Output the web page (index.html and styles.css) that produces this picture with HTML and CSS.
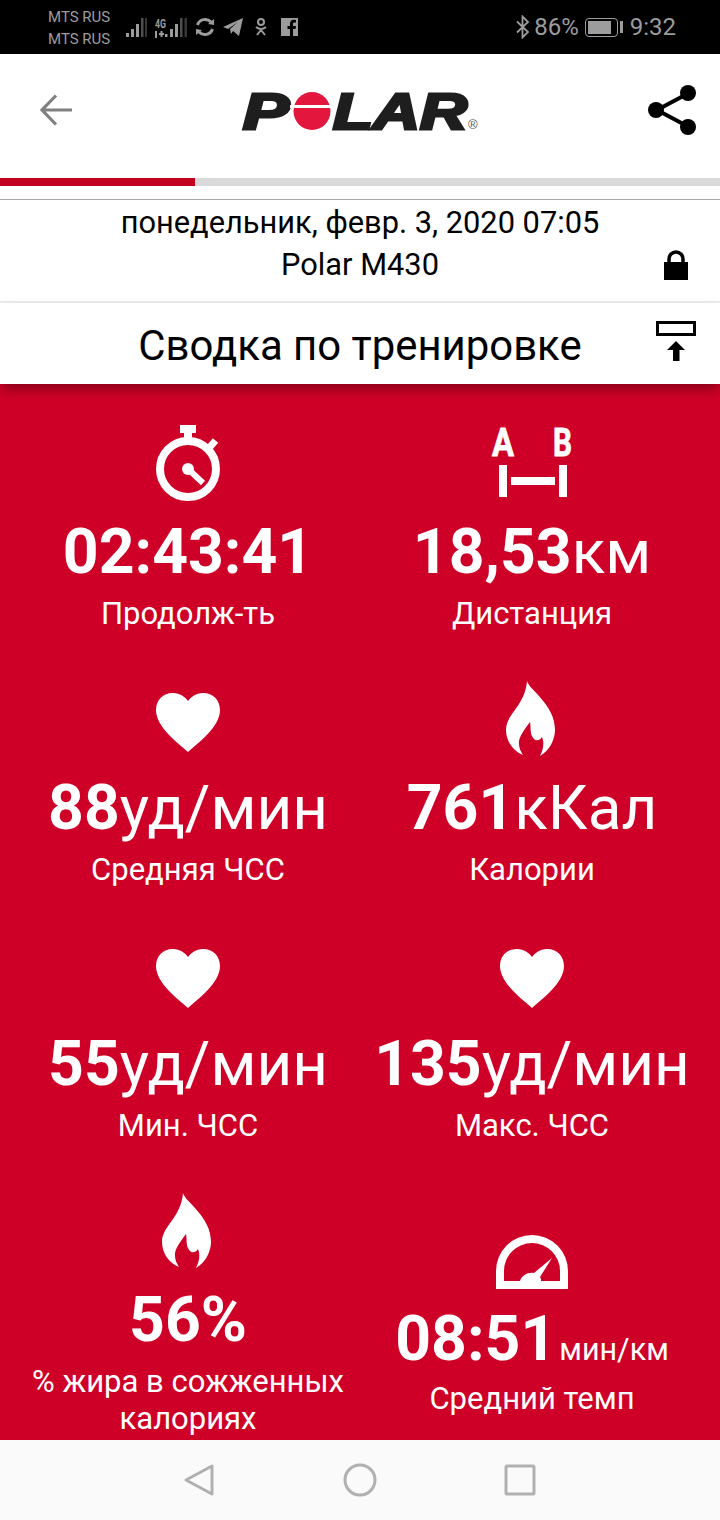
FILE: index.html
```html
<!DOCTYPE html>
<html lang="en">
<head>
    <meta charset="UTF-8">
    <meta name="viewport" content="width=device-width, initial-scale=1.0">
    <title>Polar Flow</title>
    <link rel="stylesheet" href="styles.css">
</head>
<body>
    <div class="status-bar">
        <div class="status-left">
            <div class="carriers"><span>MTS RUS</span><span>MTS RUS</span></div>
            <svg class="s-signal" viewBox="0 0 21 20"><rect x="0" y="15" width="3" height="4"/><rect x="5" y="11" width="3" height="8"/><rect x="10" y="6" width="3" height="13"/><rect x="15" y="0" width="2.500" height="19" opacity=".5"/><rect x="19" y="0" width="2" height="19" opacity=".35"/></svg>
            <svg class="s-lte" viewBox="0 0 32 20"><text class="s-4g" x="0" y="10" textLength="11" lengthAdjust="spacingAndGlyphs">4G</text><rect x="0" y="13" width="2" height="7"/><rect x="4" y="15" width="5" height="2"/><rect x="5.500" y="13" width="2" height="6"/><rect x="10" y="16" width="2.500" height="3"/><rect x="15" y="11" width="3" height="8"/><rect x="20" y="6" width="3" height="13"/><rect x="25" y="0" width="2.500" height="19" opacity=".5"/><rect x="29.500" y="0" width="2.500" height="19" opacity=".35"/></svg>
            <svg class="s-sync" viewBox="0 0 20 20"><path d="M2.500 8 A8 8 0 0 1 16 5 M17.500 12 A8 8 0 0 1 4 15" fill="none" stroke="#9c9c9c" stroke-width="3"/><path d="M19 2 L19 8 L13 7Z M1 18 L1 12 L7 13Z" fill="#9c9c9c"/></svg>
            <svg class="s-tg" viewBox="0 0 20 18"><path d="M0 9 L20 0 L16 18 L10 13 L8 16 L7 11 L15 4 L5 11Z"/></svg>
            <svg class="s-ok" viewBox="0 0 12 18"><circle cx="6" cy="4" r="3" fill="none" stroke="#9c9c9c" stroke-width="2"/><path d="M1 9 Q6 13 11 9 M6 11 V12 M2 17 L6 12 L10 17" fill="none" stroke="#9c9c9c" stroke-width="2"/></svg>
            <svg class="s-fb" viewBox="0 0 17 18"><path fill-rule="evenodd" d="M0 0H17V18H12V11H14.500L15 8H12V6C12 5 12.500 4.500 13.500 4.500H15V2C14 1.800 13 1.800 12.500 1.800C10.500 1.800 9 3.200 9 5.500V8H6.500V11H9V18H0Z"/></svg>
        </div>
        <div class="status-right">
            <svg class="s-bt" viewBox="0 0 14 24"><path d="M1 6.500 L12 17 L6.500 22.500 V1.500 L12 7 L1 17.500" fill="none" stroke="#9c9c9c" stroke-width="1.800"/></svg>
            <span class="s-pct">86%</span>
            <div class="battery"><div class="battery-body"><div class="battery-fill"></div></div><div class="battery-tip"></div></div>
            <span class="s-time">9:32</span>
        </div>
    </div>

    <header class="app-header">
        <svg class="back-icon" viewBox="0 0 32 32"><path d="M16 1.500 L2 16 L16 30.500 M2.500 16 H32" fill="none" stroke="#808080" stroke-width="3.200"/></svg>
        <svg class="logo" viewBox="0 -12 240 64">
            <text class="logo-text" x="3" y="37" textLength="46" lengthAdjust="spacingAndGlyphs">P</text>
            <ellipse cx="72" cy="19" rx="18.500" ry="19" fill="#e3173e"/>
            <rect x="50" y="13" width="44" height="3" fill="#fff"/>
            <text class="logo-text" x="93" y="37" textLength="134" lengthAdjust="spacingAndGlyphs">LAR</text>
            <text class="logo-reg" x="228" y="37">®</text>
        </svg>
        <svg class="share-icon" viewBox="0 0 48 50"><path d="M39 9 L9 25 L39 41" fill="none" stroke="#000" stroke-width="4"/><circle cx="40" cy="8" r="8"/><circle cx="8" cy="25" r="8"/><circle cx="40" cy="42" r="8"/></svg>
    </header>

    <div class="progress"><div class="progress-fill"></div></div>

    <section class="session-info">
        <div class="session-text">
            <div>понедельник, февр. 3, 2020 07:05</div>
            <div>Polar M430</div>
        </div>
        <svg class="lock-icon" viewBox="0 0 24 30"><path d="M5 13 V9 A7 7 0 0 1 19 9 V13" fill="none" stroke="#000" stroke-width="3.500"/><rect x="0" y="12" width="24" height="18"/></svg>
    </section>

    <section class="summary-title">
        <h1>Сводка по тренировке</h1>
        <svg class="export-icon" viewBox="0 0 40 40"><rect x="1.500" y="1.500" width="37" height="12" fill="#fff" stroke="#000" stroke-width="3"/><path d="M20 20 L29 29 H23.500 V40 H17 V29 H11Z"/></svg>
    </section>

    <main class="stats">
        <div class="stat">
            <svg class="stat-icon" viewBox="0 0 80 80"><rect x="32" y="1" width="16" height="8"/><rect x="36" y="8" width="8" height="9"/><path d="M62 23 L67.500 16.500" stroke="#fff" stroke-width="7"/><circle cx="40" cy="45" r="28" fill="none" stroke="#fff" stroke-width="8"/><circle cx="40" cy="45" r="6"/><path d="M40 45 L55 59" stroke="#fff" stroke-width="6"/></svg>
            <div class="value">02:43:41</div>
            <div class="label">Продолж-ть</div>
        </div>
        <div class="stat">
            <svg class="stat-icon stat-icon-ab" viewBox="-4 -8 88 88"><text class="ab" x="0" y="32" textLength="22" lengthAdjust="spacingAndGlyphs">A</text><text class="ab" x="61" y="32" textLength="19" lengthAdjust="spacingAndGlyphs">B</text><rect x="7" y="41" width="8" height="32"/><rect x="67" y="41" width="8" height="32"/><rect x="19" y="53" width="44" height="8"/></svg>
            <div class="value">18,53<span class="unit">км</span></div>
            <div class="label">Дистанция</div>
        </div>
        <div class="stat">
            <svg class="stat-icon" viewBox="0 0 80 80"><path d="M40 72 C30 63 8 47 8 30 C8 20 15 13 25 13 C32 13 37 17 40 21 C43 17 48 13 55 13 C65 13 72 20 72 30 C72 47 50 63 40 72Z"/></svg>
            <div class="value">88<span class="unit">уд/мин</span></div>
            <div class="label">Средняя ЧСС</div>
        </div>
        <div class="stat">
            <svg class="stat-icon" viewBox="0 0 80 80"><path d="M35 1 C37 10 63 24 63 50 C63 60 57 71 48 76 C52 68 52 62 50 57 C47 62 42 61 40 56 C38 52 39 47 38 42 C32 50 26 58 27 64 C27 68 29 72 31 75 C21 71 14 61 14 50 C14 34 33 26 35 1Z"/></svg>
            <div class="value">761<span class="unit">кКал</span></div>
            <div class="label">Калории</div>
        </div>
        <div class="stat">
            <svg class="stat-icon" viewBox="0 0 80 80"><path d="M40 72 C30 63 8 47 8 30 C8 20 15 13 25 13 C32 13 37 17 40 21 C43 17 48 13 55 13 C65 13 72 20 72 30 C72 47 50 63 40 72Z"/></svg>
            <div class="value">55<span class="unit">уд/мин</span></div>
            <div class="label">Мин. ЧСС</div>
        </div>
        <div class="stat">
            <svg class="stat-icon" viewBox="0 0 80 80"><path d="M40 72 C30 63 8 47 8 30 C8 20 15 13 25 13 C32 13 37 17 40 21 C43 17 48 13 55 13 C65 13 72 20 72 30 C72 47 50 63 40 72Z"/></svg>
            <div class="value">135<span class="unit">уд/мин</span></div>
            <div class="label">Макс. ЧСС</div>
        </div>
        <div class="stat">
            <svg class="stat-icon" viewBox="0 0 80 80"><path d="M35 1 C37 10 63 24 63 50 C63 60 57 71 48 76 C52 68 52 62 50 57 C47 62 42 61 40 56 C38 52 39 47 38 42 C32 50 26 58 27 64 C27 68 29 72 31 75 C21 71 14 61 14 50 C14 34 33 26 35 1Z"/></svg>
            <div class="value">56%</div>
            <div class="label label-wrap">% жира в сожженных калориях</div>
        </div>
        <div class="stat stat-pace">
            <svg class="gauge-icon" viewBox="0 0 72 54"><path fill-rule="evenodd" d="M0 54 V36 A36 36 0 0 1 72 36 V54Z M8 46 H24 C26 40 32 37 38 38 L56 23 L44 42 C45 43 45 45 45 46 H64 V36 A28 28 0 0 0 8 36Z"/></svg>
            <div class="value">08:51<span class="unit-small">мин/км</span></div>
            <div class="label">Средний темп</div>
        </div>
    </main>

    <nav class="nav-bar">
        <svg class="nav-icon" viewBox="0 0 34 34"><path d="M3 17 L29 3 V31Z" fill="none" stroke="#b0b0b0" stroke-width="3" stroke-linejoin="round"/></svg>
        <svg class="nav-icon" viewBox="0 0 34 34"><circle cx="17" cy="17" r="15" fill="none" stroke="#b0b0b0" stroke-width="3"/></svg>
        <svg class="nav-icon" viewBox="0 0 34 34"><rect x="3" y="3" width="28" height="28" rx="1" fill="none" stroke="#b0b0b0" stroke-width="3"/></svg>
    </nav>
</body>
</html>
```

FILE: styles.css
```css
* {
    margin: 0;
    padding: 0;
    box-sizing: border-box;
}

body {
    font-family: Roboto, 'Noto Sans', sans-serif;
    width: 720px;
    height: 1520px;
    overflow: hidden;
    background: white;
    display: flex;
    flex-direction: column;
    color: black;
}

.status-bar {
    height: 54px;
    background: black;
    color: #9c9c9c;
    display: flex;
    justify-content: space-between;
    align-items: center;
    padding: 0 44px 0 48px;
}

.status-left,
.status-right {
    display: flex;
    align-items: center;
}

.status-bar svg {
    fill: #9c9c9c;
    display: block;
}

.carriers {
    display: flex;
    flex-direction: column;
    font-size: 15px;
    line-height: 22px;
    width: 78px;
    margin-top: 2px;
}

.s-signal {
    width: 21px;
    height: 20px;
    margin-top: 2px;
}

.s-lte {
    width: 32px;
    height: 20px;
    margin: 2px 0 0 8px;
    overflow: visible;
}

.s-4g {
    font-size: 12px;
    font-weight: 700;
}

.s-sync {
    width: 20px;
    height: 20px;
    margin-left: 8px;
}

.s-tg {
    width: 20px;
    height: 18px;
    margin-left: 8px;
}

.s-ok {
    width: 12px;
    height: 18px;
    margin-left: 12px;
}

.s-fb {
    width: 17px;
    height: 18px;
    margin-left: 14px;
}

.s-bt {
    width: 14px;
    height: 24px;
}

.s-pct {
    font-size: 24px;
    margin-left: 4px;
}

.battery {
    display: flex;
    align-items: center;
    margin-left: 6px;
}

.battery-body {
    width: 33px;
    height: 19px;
    border: 1.500px solid #9c9c9c;
    border-radius: 4px;
    padding: 2px;
}

.battery-fill {
    width: 86%;
    height: 100%;
    background: #9c9c9c;
}

.battery-tip {
    width: 3px;
    height: 12px;
    margin-left: 2px;
    background: #9c9c9c;
}

.s-time {
    font-size: 24px;
    margin-left: 7px;
}

.app-header {
    height: 124px;
    display: flex;
    justify-content: space-between;
    align-items: flex-start;
    padding: 31px 24px 0 40px;
}

.back-icon {
    width: 32px;
    height: 32px;
    margin-top: 9px;
}

.logo {
    width: 240px;
    height: 64px;
    margin: -5px 0 0 -1px;
}

.logo-text {
    font-family: 'Liberation Sans', sans-serif;
    font-weight: 700;
    font-style: italic;
    font-size: 50px;
    fill: #1e1e1e;
    stroke: #1e1e1e;
    stroke-width: 3px;
}

.logo-reg {
    font-family: 'Liberation Sans', sans-serif;
    font-size: 13px;
    fill: #555;
}

.share-icon {
    width: 48px;
    height: 50px;
}

.progress {
    height: 8px;
    background: #d9d9d9;
}

.progress-fill {
    width: 195px;
    height: 100%;
    background: #c30020;
}

.session-info {
    margin-top: 13px;
    border-top: 1px solid #a8a8a8;
    border-bottom: 2px solid #eeeeee;
    height: 104px;
    display: grid;
    grid-template-columns: 1fr auto 1fr;
    font-size: 30.800px;
    line-height: 42px;
    text-align: center;
    padding-right: 32px;
}

.session-text {
    grid-column: 2;
    margin-top: 2px;
    margin-right: -32px;
}

.lock-icon {
    grid-column: 3;
    justify-self: end;
    align-self: end;
    width: 24px;
    height: 30px;
    margin-bottom: 21px;
}

.summary-title {
    height: 81px;
    display: grid;
    grid-template-columns: 1fr auto 1fr;
    align-items: center;
    padding-right: 24px;
    position: relative;
    z-index: 1;
    background: white;
    box-shadow: 0 6px 12px -2px rgba(0, 0, 0, 0.4);
}

.summary-title h1 {
    grid-column: 2;
    font-size: 41.900px;
    font-weight: 400;
    margin: 4px -24px 0 0;
}

.export-icon {
    grid-column: 3;
    justify-self: end;
    width: 40px;
    height: 40px;
    margin-top: -5px;
}

.stats {
    flex: 1;
    background: #cf0027;
    color: white;
    padding: 40px 16px 0;
    display: grid;
    grid-template-columns: 344px 344px;
    grid-auto-rows: 256px;
    overflow: hidden;
}

.stat {
    display: flex;
    flex-direction: column;
    align-items: center;
    text-align: center;
}

.stat-icon {
    width: 80px;
    height: 80px;
    fill: white;
    flex-shrink: 0;
}

.stat-icon-ab {
    width: 88px;
    height: 88px;
    margin-top: -8px;
}

.stat-icon circle:not([fill]) {
    fill: white;
}

.gauge-icon {
    width: 72px;
    height: 54px;
    fill: white;
    margin-top: 43px;
}

.ab {
    font-family: Roboto, sans-serif;
    font-weight: 700;
    font-size: 38px;
    stroke: white;
    stroke-width: 0.800px;
}

.value {
    font-size: 62.500px;
    font-weight: 700;
    line-height: 72px;
    margin-top: 12px;
    white-space: nowrap;
}

.unit {
    font-size: 62px;
    font-weight: 400;
}

.unit-small {
    font-size: 30.500px;
    font-weight: 400;
    margin-left: 3px;
}

.label {
    font-size: 31px;
    line-height: 37px;
    margin-top: 7px;
}

.label-wrap {
    width: 330px;
}

.stat-pace .value {
    margin-top: 14px;
}

.stat-pace .label {
    margin-top: -6px;
}

.nav-bar {
    height: 80px;
    flex-shrink: 0;
    background: #fafafa;
    display: flex;
    align-items: center;
    justify-content: center;
    gap: 126px;
}

.nav-icon {
    width: 34px;
    height: 34px;
}
```
